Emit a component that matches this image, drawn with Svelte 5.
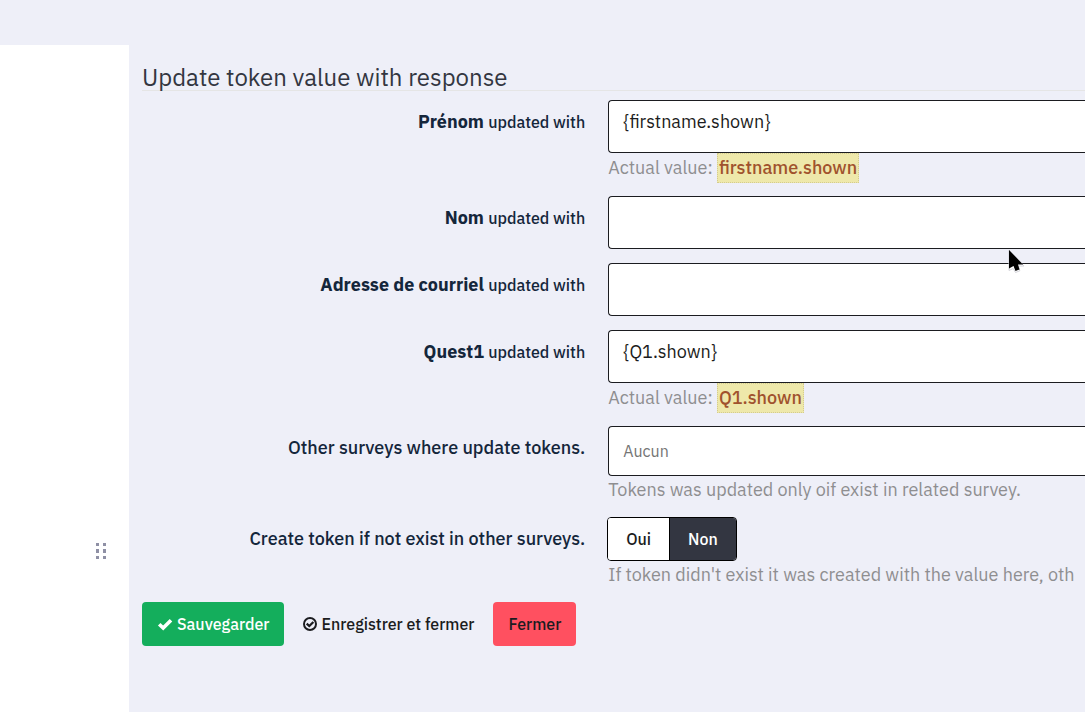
<script>
  let fields = $state([
    { id: 'firstname', name: 'Prénom', value: '{firstname.shown}', actual: 'firstname.shown' },
    { id: 'lastname', name: 'Nom', value: '', actual: '' },
    { id: 'email', name: 'Adresse de courriel', value: '', actual: '' },
    { id: 'quest1', name: 'Quest1', value: '{Q1.shown}', actual: 'Q1.shown' },
  ]);
  let surveys = $state('');
  let createToken = $state('N');
</script>

<div class="page">
  <aside class="sidebar">
    <svg class="grip" width="12" height="18" viewBox="0 0 12 18" aria-hidden="true">
      <g fill="#8f90a5">
        <rect x="1" y="1" width="3" height="3" /><rect x="8" y="1" width="3" height="3" />
        <rect x="1" y="7" width="3" height="4" /><rect x="8" y="7" width="3" height="4" />
        <rect x="1" y="14" width="3" height="3" /><rect x="8" y="14" width="3" height="3" />
      </g>
    </svg>
  </aside>

  <main>
    <form onsubmit={(e) => e.preventDefault()}>
      <h1>Update token value with response</h1>

      {#each fields as field (field.id)}
        <div class="row">
          <label for={field.id}><strong>{field.name}</strong> <small>updated with</small></label>
          <div class="control">
            <textarea id={field.id} rows="1" bind:value={field.value}></textarea>
            {#if field.actual}
              <p class="actual">Actual value: <b>{field.actual}</b></p>
            {/if}
          </div>
        </div>
      {/each}

      <div class="row">
        <label for="surveys">Other surveys where update tokens.</label>
        <div class="control">
          <input class="text" id="surveys" type="text" placeholder="Aucun" bind:value={surveys} />
          <p class="help">Tokens was updated only oif exist in related survey.</p>
        </div>
      </div>

      <div class="row">
        <span class="label" id="create-label">Create token if not exist in other surveys.</span>
        <div class="control">
          <div class="switch" role="radiogroup" aria-labelledby="create-label">
            <label><input type="radio" name="create" value="Y" bind:group={createToken} />Oui</label>
            <label><input type="radio" name="create" value="N" bind:group={createToken} />Non</label>
          </div>
          <p class="help">If token didn't exist it was created with the value here, oth</p>
        </div>
      </div>

      <div class="actions">
        <button class="save" type="submit">
          <svg width="16" height="16" viewBox="0 0 16 16" aria-hidden="true">
            <path d="M2.2 8.2 6.2 12 14 4.2" fill="none" stroke="currentColor" stroke-width="3.6" />
          </svg>
          Sauvegarder
        </button>
        <button class="plain" type="submit">
          <svg width="14" height="14" viewBox="0 0 14 14" aria-hidden="true">
            <circle cx="7" cy="7" r="6" fill="none" stroke="currentColor" stroke-width="2" />
            <path d="M3.7 6.6 6.3 9 10.4 5" fill="none" stroke="currentColor" stroke-width="2.3" />
          </svg>
          Enregistrer et fermer
        </button>
        <a class="close" href="#close">Fermer</a>
      </div>
    </form>
  </main>

  <svg class="pointer" width="18" height="26" viewBox="0 0 18 26" aria-hidden="true">
    <path d="M1 1V21.5L5.2 19.5 7.5 23.5 11.8 21.8 10.5 17H16Z" fill="#fff" stroke="#d4d4da" stroke-width="1" />
    <path d="M1 1V19.500L5.500 17 7.500 22 11.500 20.500 10 15.500H15Z" fill="#000" />
  </svg>
</div>

<style>
  :global(body) {
    margin: 0;
    background: #eeeff8;
  }
  .page {
    position: relative;
    box-sizing: border-box;
    display: flex;
    min-height: 100vh;
    padding-top: 45px;
    overflow: hidden;
    color: #1b1c20;
    font: 18px/27px "IBM Plex Sans", Roboto, sans-serif;
  }
  .sidebar {
    box-sizing: border-box;
    flex: 0 0 129px;
    display: flex;
    justify-content: flex-end;
    padding: 497px 22px 0 0;
    background: #fff;
  }
  main {
    flex: 1;
    min-width: 0;
    padding: 20px 0 24px 13px;
  }
  h1 {
    margin: 0 0 9px;
    border-bottom: 1px solid #e5e5e5;
    color: #333641;
    font-size: 24px;
    font-weight: 400;
    line-height: 25px;
  }
  .row {
    display: grid;
    grid-template-columns: 47% minmax(0, 1fr);
    column-gap: 23px;
    margin-bottom: 14px;
  }
  .row > label,
  .row > .label {
    padding-top: 8px;
    color: #14263b;
    font-weight: 500;
    text-align: right;
  }
  strong {
    font-weight: 700;
  }
  small {
    font-size: 16px;
  }
  textarea,
  .text {
    box-sizing: border-box;
    display: block;
    width: 100%;
    margin: 0;
    padding: 7px 14px;
    border: 1px solid #1b1c20;
    border-right: 0;
    border-radius: 4px 0 0 4px;
    background: #fff;
    color: #1b1c20;
    font: inherit;
    outline: 0;
  }
  textarea {
    height: 53px;
    resize: none;
    overflow: hidden;
  }
  .text {
    height: 50px;
    font-size: 16px;
  }
  .text::placeholder {
    color: #757575;
  }
  p {
    margin: 0;
    color: #8e8e90;
    white-space: nowrap;
  }
  .actual {
    height: 29px;
    line-height: 30px;
  }
  .actual b {
    display: inline-block;
    box-sizing: border-box;
    height: 30px;
    padding: 0 1px;
    border: 1px dotted #d3cb8e;
    background: #eee8aa;
    color: #a0522d;
    font-weight: 500;
    line-height: 28px;
    vertical-align: top;
  }
  .help {
    line-height: 27px;
    overflow: hidden;
  }
  .switch {
    display: inline-flex;
    box-sizing: border-box;
    height: 44px;
    margin-left: -1px;
    border: 1px solid #000;
    border-radius: 4px;
    overflow: hidden;
    vertical-align: top;
  }
  .switch label {
    position: relative;
    display: flex;
    align-items: center;
    padding: 0 18px;
    background: #fff;
    font-size: 16px;
    font-weight: 500;
    cursor: pointer;
  }
  .switch label + label {
    border-left: 1px solid #000;
  }
  .switch label:has(input:checked) {
    background: #333641;
    color: #fff;
  }
  .switch input {
    position: absolute;
    opacity: 0;
    margin: 0;
  }
  .actions {
    display: flex;
    gap: 4px;
  }
  .actions button,
  .actions a {
    box-sizing: border-box;
    display: flex;
    align-items: center;
    gap: 4px;
    height: 44px;
    padding: 0 15px;
    border: 0;
    border-radius: 4px;
    background: none;
    color: #1b1c20;
    font: 500 16px/24px "IBM Plex Sans", Roboto, sans-serif;
    text-decoration: none;
    white-space: nowrap;
    cursor: pointer;
  }
  .actions .save {
    background: #14ae5c;
    color: #fff;
  }
  .actions .close {
    background: #ff5060;
  }
  .pointer {
    position: absolute;
    left: 1008px;
    top: 249px;
  }
</style>
